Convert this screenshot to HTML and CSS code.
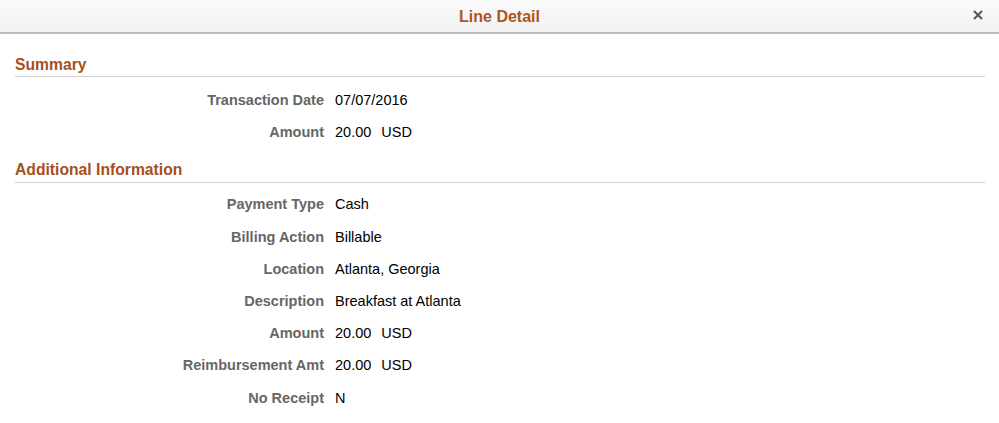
FILE: index.html
```html
<!DOCTYPE html>
<html>
<head>
<meta charset="utf-8">
<link rel="stylesheet" href="styles.css">
</head>
<body>
<div class="dialog">
  <header class="titlebar">
    <h1 class="title">Line Detail</h1>
    <button class="close" aria-label="Close">
      <svg width="10" height="10" viewBox="0 0 10 10"><path d="M1 1L9 9M9 1L1 9" stroke="#555" stroke-width="2"/></svg>
    </button>
  </header>
  <section class="group">
    <h2 class="group-title">Summary</h2>
    <div class="rows">
      <div class="row"><span class="label">Transaction Date</span><span class="value">07/07/2016</span></div>
      <div class="row"><span class="label">Amount</span><span class="value">20.00<span class="cur">USD</span></span></div>
    </div>
  </section>
  <section class="group second">
    <h2 class="group-title">Additional Information</h2>
    <div class="rows">
      <div class="row"><span class="label">Payment Type</span><span class="value">Cash</span></div>
      <div class="row"><span class="label">Billing Action</span><span class="value">Billable</span></div>
      <div class="row"><span class="label">Location</span><span class="value">Atlanta, Georgia</span></div>
      <div class="row"><span class="label">Description</span><span class="value">Breakfast at Atlanta</span></div>
      <div class="row"><span class="label">Amount</span><span class="value">20.00<span class="cur">USD</span></span></div>
      <div class="row"><span class="label">Reimbursement Amt</span><span class="value">20.00<span class="cur">USD</span></span></div>
      <div class="row"><span class="label">No Receipt</span><span class="value">N</span></div>
    </div>
  </section>
</div>
</body>
</html>
```
FILE: styles.css
```css
html, body {
  margin: 0;
  padding: 0;
  background: #fff;
  font-family: "Liberation Sans", Arial, sans-serif;
}
.dialog {
  width: 999px;
  height: 423px;
  overflow: hidden;
}
.titlebar {
  height: 32px;
  border-bottom: 2px solid #bdbdbd;
  background: linear-gradient(#fbfbfb, #f1f1f1);
  display: flex;
  align-items: center;
  justify-content: center;
  position: relative;
  box-sizing: content-box;
}
.title {
  margin: 0;
  font-size: 16px;
  font-weight: bold;
  color: #b0541a;
  padding-top: 1px;
}
.close {
  position: absolute;
  left: 973px;
  top: 10px;
  border: 0;
  padding: 0;
  background: none;
  width: 10px;
  height: 10px;
  display: flex;
}
.group {
  padding: 0 14px 0 15px;
}
.group-title {
  margin: 0;
  font-size: 15.7px;
  font-weight: bold;
  color: #a5501b;
  padding: 21px 0 1px 0;
  border-bottom: 1px solid #d0d0d0;
  line-height: 20px;
}
.second .group-title {
  padding-top: 0;
  padding-bottom: 2px;
  margin-top: 2px;
}
.rows {
  padding-top: 7px;
  padding-bottom: 10px;
}
.second .rows {
  padding-top: 5px;
}
.row {
  display: flex;
  align-items: baseline;
  height: 32.2px;
  line-height: 32px;
  font-size: 14.5px;
}
.label {
  width: 309px;
  text-align: right;
  font-weight: bold;
  color: #666;
  flex: none;
}
.value {
  padding-left: 11px;
  color: #000;
}
.cur {
  margin-left: 10px;
}
```
